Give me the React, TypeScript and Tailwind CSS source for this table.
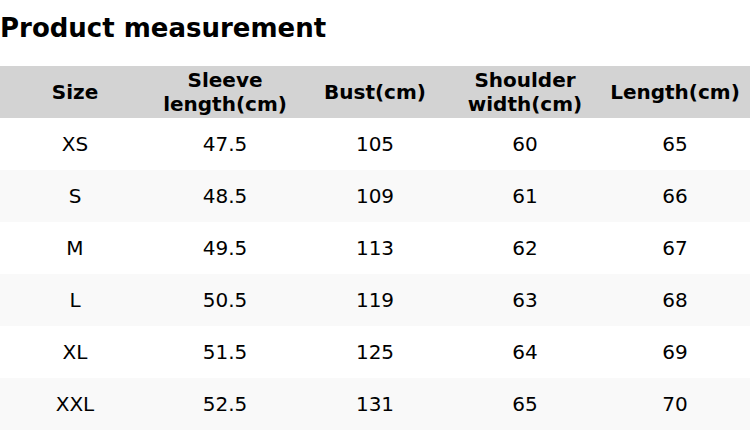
const headers = ["Size", "Sleeve length(cm)", "Bust(cm)", "Shoulder width(cm)", "Length(cm)"];

const rows = [
  ["XS", "47.5", "105", "60", "65"],
  ["S", "48.5", "109", "61", "66"],
  ["M", "49.5", "113", "62", "67"],
  ["L", "50.5", "119", "63", "68"],
  ["XL", "51.5", "125", "64", "69"],
  ["XXL", "52.5", "131", "65", "70"],
];

export default function App() {
  return (
    <div className="w-[750px] h-[430px] bg-white text-black font-['DejaVu_Sans',sans-serif] overflow-hidden">
      <h2 className="pt-[10px] mb-[19px] text-[26px] leading-[37px] font-bold">Product measurement</h2>

      <div className="grid grid-cols-5 h-[52px] bg-[#d3d3d3] text-[20px] leading-[24px] font-bold">
        {headers.map((h) => (
          <div key={h} className="flex items-center justify-center text-center px-2">
            {h === "Sleeve length(cm)" ? (
              <span>Sleeve<br />length(cm)</span>
            ) : h === "Shoulder width(cm)" ? (
              <span>Shoulder<br />width(cm)</span>
            ) : (
              h
            )}
          </div>
        ))}
      </div>

      {rows.map((r, i) => (
        <div
          key={r[0]}
          className={`grid grid-cols-5 h-[52px] text-[20px] ${i % 2 === 1 ? "bg-[#f9f9f9]" : "bg-white"}`}
        >
          {r.map((c, j) => (
            <div key={j} className="flex items-center justify-center">
              {c}
            </div>
          ))}
        </div>
      ))}
    </div>
  );
}
